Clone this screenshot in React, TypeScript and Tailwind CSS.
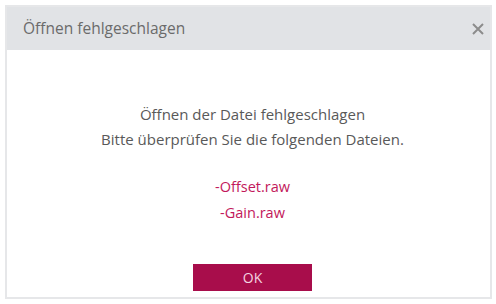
export default function App() {
  return (
    <div
      className="h-[304px] w-[496px] bg-white pl-[5px] pr-[4px] pt-[5px] pb-[5px]"
      style={{ fontFamily: '"Open Sans", "Noto Sans", sans-serif' }}
    >
      <div className="flex h-full flex-col border-2 border-[#e6e7e9] bg-white">
        <div className="flex h-[43px] items-center justify-between bg-[#e1e3e6] pl-[16px] pr-[5px]">
          <span className="text-[15.5px] text-[#6b6b6b]">Öffnen fehlgeschlagen</span>
          <svg width="14" height="14" viewBox="0 0 14 14" className="text-[#8c8c8c]">
            <path d="M2 2 L12 12 M12 2 L2 12" stroke="currentColor" strokeWidth="2" />
          </svg>
        </div>
        <div className="flex flex-1 flex-col items-center pl-[8px] pt-[52px]">
          <p className="text-[15px] leading-[25px] text-[#595959]">Öffnen der Datei fehlgeschlagen</p>
          <p className="text-[15px] leading-[25px] text-[#595959]">Bitte überprüfen Sie die folgenden Dateien.</p>
          <p className="mt-[22px] text-[14.5px] leading-[26px] text-[#c2185b]">-Offset.raw</p>
          <p className="text-[14.5px] leading-[26px] text-[#c2185b]">-Gain.raw</p>
          <button className="mt-[38px] h-[27px] w-[119px] bg-[#a80d4b] text-[14px] text-[#f4d3e0]">OK</button>
        </div>
      </div>
    </div>
  );
}
